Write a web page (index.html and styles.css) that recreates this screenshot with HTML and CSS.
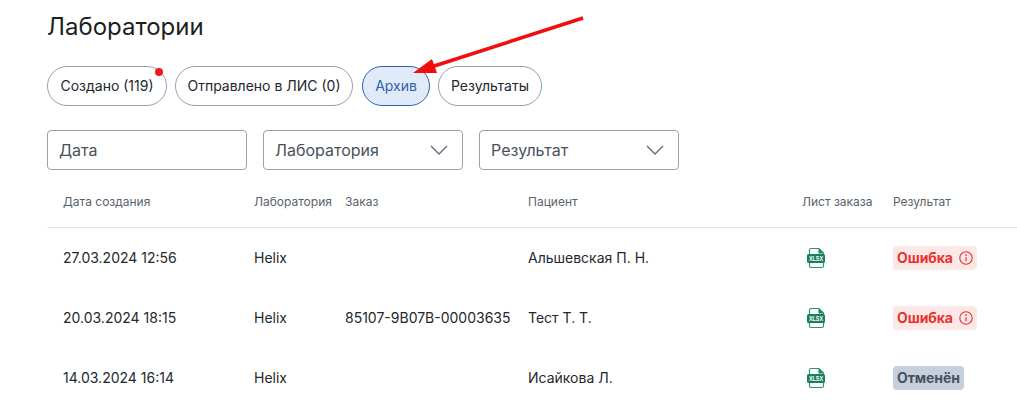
FILE: index.html
```html
<!DOCTYPE html>
<html lang="ru">
<head>
<meta charset="utf-8">
<title>Лаборатории</title>
<link rel="stylesheet" href="styles.css">
</head>
<body>
<svg width="0" height="0" class="defs">
  <symbol id="fileshape" viewBox="0 0 20 22">
    <path d="M2.500 7V3a1.500 1.500 0 0 1 1.500-1.500h8l4.500 4.500V7M2.500 16v3A1.500 1.500 0 0 0 4 20.500h11a1.500 1.500 0 0 0 1.500-1.500v-3" fill="none" stroke="#2a9478" stroke-width="1.200"/>
    <path d="M11.500 1.500l5 5h-5z" fill="#1a7f5f"/>
    <rect x="0" y="7" width="18" height="9" rx="1.500" fill="#1a7f5f"/>
  </symbol>
  <symbol id="info" viewBox="0 0 14 14">
    <circle cx="7" cy="7" r="6.200" fill="none" stroke="currentColor" stroke-width="1.100"/>
    <path d="M7 6.200v4" stroke="currentColor" stroke-width="1.200" fill="none"/>
    <circle cx="7" cy="4.100" r=".85" fill="currentColor"/>
  </symbol>
  <symbol id="chev" viewBox="0 0 18 10">
    <path d="M1 1l8 8 8-8" fill="none" stroke="#5f6b76" stroke-width="1.300"/>
  </symbol>
</svg>
<main class="page">
  <h1 class="title">Лаборатории</h1>
  <div class="chips">
    <button class="chip chip-dot w120">Создано (119)</button>
    <button class="chip w178">Отправлено в ЛИС (0)</button>
    <button class="chip chip-active w68">Архив</button>
    <button class="chip w104">Результаты</button>
  </div>
  <div class="filters">
    <div class="field">Дата</div>
    <div class="field">Лаборатория<svg class="chev"><use href="#chev"/></svg></div>
    <div class="field">Результат<svg class="chev"><use href="#chev"/></svg></div>
  </div>
  <div class="table">
    <div class="row head">
      <div>Дата создания</div><div>Лаборатория</div><div>Заказ</div><div>Пациент</div><div>Лист заказа</div><div>Результат</div>
    </div>
    <div class="row">
      <div>27.03.2024 12:56</div><div>Helix</div><div></div><div>Альшевская П. Н.</div>
      <div><svg class="file" viewBox="0 0 20 22"><use href="#fileshape" width="20" height="22"/><text x="9" y="14.200" textLength="14" lengthAdjust="spacingAndGlyphs" class="xlsx-text">XLSX</text></svg></div>
      <div><span class="badge badge-err">Ошибка<svg class="info"><use href="#info"/></svg></span></div>
    </div>
    <div class="row">
      <div>20.03.2024 18:15</div><div>Helix</div><div>85107-9B07B-00003635</div><div>Тест Т. Т.</div>
      <div><svg class="file" viewBox="0 0 20 22"><use href="#fileshape" width="20" height="22"/><text x="9" y="14.200" textLength="14" lengthAdjust="spacingAndGlyphs" class="xlsx-text">XLSX</text></svg></div>
      <div><span class="badge badge-err">Ошибка<svg class="info"><use href="#info"/></svg></span></div>
    </div>
    <div class="row">
      <div>14.03.2024 16:14</div><div>Helix</div><div></div><div>Исайкова Л.</div>
      <div><svg class="file" viewBox="0 0 20 22"><use href="#fileshape" width="20" height="22"/><text x="9" y="14.200" textLength="14" lengthAdjust="spacingAndGlyphs" class="xlsx-text">XLSX</text></svg></div>
      <div><span class="badge badge-off">Отменён</span></div>
    </div>
  </div>
</main>
<svg class="arrow" width="1017" height="411" viewBox="0 0 1017 411">
  <path d="M583 18L428 68" stroke="#ee0f0f" stroke-width="3.500" fill="none"/>
  <path d="M413 73L432 59L437 73Z" fill="#ee0f0f"/>
</svg>
</body>
</html>
```
FILE: styles.css
```css
* { box-sizing: border-box; }
html, body { margin: 0; height: 411px; overflow: hidden; background: #fff; }
body { font-family: Inter, "Liberation Sans", sans-serif; color: #1d2125; position: relative; }
.defs { position: absolute; }
.page { padding: 12px 0 0 47px; }
.title { margin: 0; font-size: 24px; line-height: 30px; font-weight: 400; color: #1b1f23; }
.chips { display: flex; gap: 8px; margin-top: 24px; }
.chip { height: 40px; padding: 0 0 2px; border: 1px solid #8fa1b3; border-radius: 20px; background: #fff; font: 14px Inter, "Liberation Sans", sans-serif; color: #22282e; position: relative; }
.w120 { width: 120px; }
.w178 { width: 178px; margin-right: 1px; }
.w68 { width: 68px; }
.w104 { width: 104px; }
.chip-dot::after { content: ""; position: absolute; top: 1px; right: 3px; width: 8px; height: 8px; border-radius: 50%; background: #ee1c1c; }
.chip-active { background: #e1eaf8; border-color: #2f62b0; color: #2f62b0; }
.filters { display: flex; gap: 16px; margin-top: 24px; }
.field { width: 200px; height: 40px; padding: 0 11px; border: 1px solid #9aa0a6; border-radius: 4px; display: flex; align-items: center; justify-content: space-between; font-size: 16px; color: #4a5259; }
.chev { width: 18px; height: 10px; margin-right: 3px; }
.table { margin-top: 12px; }
.row { display: grid; grid-template-columns: 191px 91px 183px 274px 91px 1fr; height: 60px; padding-left: 16px; align-items: center; font-size: 14px; color: #22282e; }
.row.head { height: 46px; padding-bottom: 7px; margin-bottom: -1px; border-bottom: 1px solid #e3e5e7; font-size: 12px; color: #59636d; }
.file { display: block; width: 20px; height: 22px; margin: 1px 0 0 5px; }
.xlsx-text { font: 700 7px "Liberation Sans", sans-serif; fill: #fff; text-anchor: middle; }
.badge { display: inline-flex; align-items: center; height: 24px; padding: 0 4px 1px; border-radius: 4px; font-size: 14px; font-weight: 700; letter-spacing: -.1px; position: relative; top: 1px; }
.badge-err { background: #fde8e8; color: #e8322d; }
.badge-off { background: #c6d0dd; color: #46525f; }
.info { width: 14px; height: 14px; margin-left: 6px; }
.arrow { position: absolute; left: 0; top: 0; pointer-events: none; }
```
